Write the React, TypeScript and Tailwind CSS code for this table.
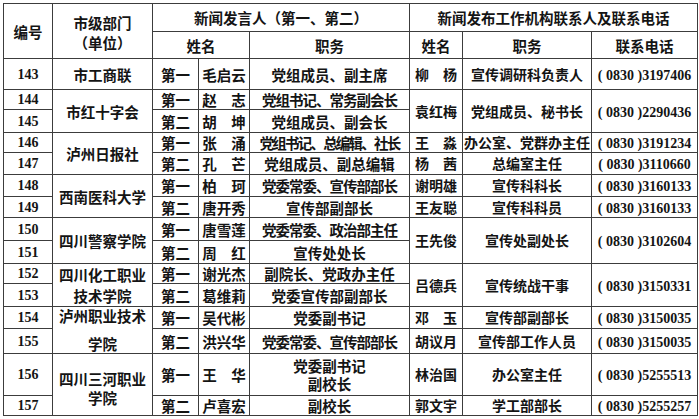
import type { ReactNode } from 'react'

type Contact = { name: string; duty: string; phone: string; span: number }

type Row = {
  no: string
  height: string
  dept?: { text: ReactNode; span: number }
  rank: string
  name: string
  duty: ReactNode
  dutyClass?: string
  contact?: Contact
}

const rows: Row[] = [
  {
    no: '143',
    height: 'h-[31px]',
    dept: { text: '市工商联', span: 1 },
    rank: '第一',
    name: '毛启云',
    duty: '党组成员、副主席',
    contact: { name: '柳　杨', duty: '宣传调研科负责人', phone: '3197406', span: 1 },
  },
  {
    no: '144',
    height: 'h-[20px]',
    dept: { text: '市红十字会', span: 2 },
    rank: '第一',
    name: '赵　志',
    duty: '党组书记、常务副会长',
    dutyClass: 'tracking-[-1px]',
    contact: { name: '袁红梅', duty: '党组成员、秘书长', phone: '2290436', span: 2 },
  },
  { no: '145', height: 'h-[23px]', rank: '第二', name: '胡　坤', duty: '党组成员、副会长' },
  {
    no: '146',
    height: 'h-[20px]',
    dept: { text: '泸州日报社', span: 2 },
    rank: '第一',
    name: '张　涌',
    duty: '党组书记、总编辑、社长',
    dutyClass: 'tracking-[-1.8px]',
    contact: { name: '王　淼', duty: '办公室、党群办主任', phone: '3191234', span: 1 },
  },
  {
    no: '147',
    height: 'h-[22px]',
    rank: '第二',
    name: '孔　芒',
    duty: '党组成员、副总编辑',
    contact: { name: '杨　茜', duty: '总编室主任', phone: '3110660', span: 1 },
  },
  {
    no: '148',
    height: 'h-[22px]',
    dept: { text: '西南医科大学', span: 2 },
    rank: '第一',
    name: '柏　珂',
    duty: '党委常委、宣传部部长',
    dutyClass: 'tracking-[-1px]',
    contact: { name: '谢明雄', duty: '宣传科科长', phone: '3160133', span: 1 },
  },
  {
    no: '149',
    height: 'h-[21px]',
    rank: '第二',
    name: '唐开秀',
    duty: '宣传部副部长',
    contact: { name: '王友聪', duty: '宣传科科员', phone: '3160133', span: 1 },
  },
  {
    no: '150',
    height: 'h-[23px]',
    dept: { text: '四川警察学院', span: 2 },
    rank: '第一',
    name: '唐雪莲',
    duty: '党委常委、政治部主任',
    dutyClass: 'tracking-[-1px]',
    contact: { name: '王先俊', duty: '宣传处副处长', phone: '3102604', span: 2 },
  },
  { no: '151', height: 'h-[23px]', rank: '第二', name: '周　红', duty: '宣传处处长' },
  {
    no: '152',
    height: 'h-[20px]',
    dept: {
      text: (
        <span className="block leading-[21px]">
          四川化工职业
          <br />
          技术学院
        </span>
      ),
      span: 2,
    },
    rank: '第一',
    name: '谢光杰',
    duty: '副院长、党政办主任',
    contact: { name: '吕德兵', duty: '宣传统战干事', phone: '3150331', span: 2 },
  },
  { no: '153', height: 'h-[22px]', rank: '第二', name: '葛维莉', duty: '党委宣传部副部长' },
  {
    no: '154',
    height: 'h-[22px]',
    dept: {
      text: (
        <span className="-my-[5px] block leading-[28px]">
          泸州职业技术
          <br />
          学院
        </span>
      ),
      span: 2,
    },
    rank: '第一',
    name: '吴代彬',
    duty: '党委副书记',
    contact: { name: '邓　玉', duty: '宣传部副部长', phone: '3150035', span: 1 },
  },
  {
    no: '155',
    height: 'h-[24px]',
    rank: '第二',
    name: '洪兴华',
    duty: '党委常委、宣传部部长',
    dutyClass: 'tracking-[-1px]',
    contact: { name: '胡议月', duty: '宣传部工作人员', phone: '3150035', span: 1 },
  },
  {
    no: '156',
    height: 'h-[42px]',
    dept: {
      text: (
        <span className="block pt-[6px] leading-[19px]">
          四川三河职业
          <br />
          学院
        </span>
      ),
      span: 2,
    },
    rank: '第一',
    name: '王　华',
    duty: (
      <span className="block leading-[18px]">
        党委副书记
        <br />
        副校长
      </span>
    ),
    contact: { name: '林治国', duty: '办公室主任', phone: '5255513', span: 1 },
  },
  {
    no: '157',
    height: 'h-[20px]',
    rank: '第二',
    name: '卢喜宏',
    duty: '副校长',
    contact: { name: '郭文宇', duty: '学工部部长', phone: '5255257', span: 1 },
  },
]

const cell = 'border border-[#3c3c3c] p-0 text-center align-middle'
const num = "font-['Liberation_Serif',serif] font-bold text-[14px]"

function Phone({ tail }: { tail: string }) {
  return <span className={`${num} text-[13.5px]`}>( 0830 ){tail}</span>
}

export default function App() {
  return (
    <div className="min-h-[419px] w-[699px] bg-white pl-[3px] pt-[3px]">
      <table className="w-[694px] table-fixed border-collapse font-['Noto_Sans_CJK_SC',sans-serif] text-[14.5px] leading-[17px] font-bold text-[#141414]">
        <colgroup>
          <col className="w-[49px]" />
          <col className="w-[100px]" />
          <col className="w-[46px]" />
          <col className="w-[51px]" />
          <col className="w-[160px]" />
          <col className="w-[53px]" />
          <col className="w-[129px]" />
          <col className="w-[106px]" />
        </colgroup>
        <thead>
          <tr className="h-[28px]">
            <th rowSpan={2} className={cell}>
              编号
            </th>
            <th rowSpan={2} className={cell}>
              <span className="block pt-[3px] leading-[20px]">
                市级部门
                <br />
                （单位）
              </span>
            </th>
            <th colSpan={3} className={cell}>
              新闻发言人（第一、第二）
            </th>
            <th colSpan={3} className={cell}>
              新闻发布工作机构联系人及联系电话
            </th>
          </tr>
          <tr className="h-[27px]">
            <th colSpan={2} className={cell}>
              姓名
            </th>
            <th className={cell}>职务</th>
            <th className={cell}>姓名</th>
            <th className={cell}>职务</th>
            <th className={cell}>联系电话</th>
          </tr>
        </thead>
        <tbody>
          {rows.map((r) => (
            <tr key={r.no} className={r.height}>
              <td className={`${cell} ${num}`}>{r.no}</td>
              {r.dept ? (
                <td rowSpan={r.dept.span} className={cell}>
                  {r.dept.text}
                </td>
              ) : null}
              <td className={cell}>{r.rank}</td>
              <td className={cell}>{r.name}</td>
              <td className={`${cell} ${r.dutyClass ?? ''}`}>{r.duty}</td>
              {r.contact ? (
                <>
                  <td rowSpan={r.contact.span} className={`${cell} text-[14px]`}>
                    {r.contact.name}
                  </td>
                  <td rowSpan={r.contact.span} className={`${cell} text-[14px]`}>
                    {r.contact.duty}
                  </td>
                  <td rowSpan={r.contact.span} className={cell}>
                    <Phone tail={r.contact.phone} />
                  </td>
                </>
              ) : null}
            </tr>
          ))}
        </tbody>
      </table>
    </div>
  )
}
